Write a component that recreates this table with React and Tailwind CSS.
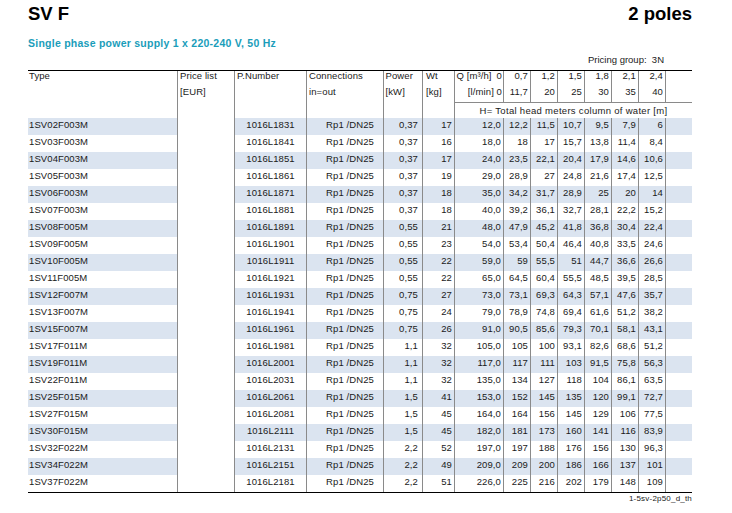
import React from 'react';

const GRID =
  'grid grid-cols-[149px_57px_72px_77px_39px_32px_49px_27px_27px_27px_27px_27px_27px_27px]';
const LINE = 'border-l border-[#8a8a8a]';
const STRIPE = 'bg-[#dbe4f0]';

const rows = [
  ['1SV02F003M', '1016L1831', '0,37', '17', '12,0', '12,2', '11,5', '10,7', '9,5', '7,9', '6'],
  ['1SV03F003M', '1016L1841', '0,37', '16', '18,0', '18', '17', '15,7', '13,8', '11,4', '8,4'],
  ['1SV04F003M', '1016L1851', '0,37', '17', '24,0', '23,5', '22,1', '20,4', '17,9', '14,6', '10,6'],
  ['1SV05F003M', '1016L1861', '0,37', '19', '29,0', '28,9', '27', '24,8', '21,6', '17,4', '12,5'],
  ['1SV06F003M', '1016L1871', '0,37', '18', '35,0', '34,2', '31,7', '28,9', '25', '20', '14'],
  ['1SV07F003M', '1016L1881', '0,37', '18', '40,0', '39,2', '36,1', '32,7', '28,1', '22,2', '15,2'],
  ['1SV08F005M', '1016L1891', '0,55', '21', '48,0', '47,9', '45,2', '41,8', '36,8', '30,4', '22,4'],
  ['1SV09F005M', '1016L1901', '0,55', '23', '54,0', '53,4', '50,4', '46,4', '40,8', '33,5', '24,6'],
  ['1SV10F005M', '1016L1911', '0,55', '22', '59,0', '59', '55,5', '51', '44,7', '36,6', '26,6'],
  ['1SV11F005M', '1016L1921', '0,55', '22', '65,0', '64,5', '60,4', '55,5', '48,5', '39,5', '28,5'],
  ['1SV12F007M', '1016L1931', '0,75', '27', '73,0', '73,1', '69,3', '64,3', '57,1', '47,6', '35,7'],
  ['1SV13F007M', '1016L1941', '0,75', '24', '79,0', '78,9', '74,8', '69,4', '61,6', '51,2', '38,2'],
  ['1SV15F007M', '1016L1961', '0,75', '26', '91,0', '90,5', '85,6', '79,3', '70,1', '58,1', '43,1'],
  ['1SV17F011M', '1016L1981', '1,1', '32', '105,0', '105', '100', '93,1', '82,6', '68,6', '51,2'],
  ['1SV19F011M', '1016L2001', '1,1', '32', '117,0', '117', '111', '103', '91,5', '75,8', '56,3'],
  ['1SV22F011M', '1016L2031', '1,1', '32', '135,0', '134', '127', '118', '104', '86,1', '63,5'],
  ['1SV25F015M', '1016L2061', '1,5', '41', '153,0', '152', '145', '135', '120', '99,1', '72,7'],
  ['1SV27F015M', '1016L2081', '1,5', '45', '164,0', '164', '156', '145', '129', '106', '77,5'],
  ['1SV30F015M', '1016L2111', '1,5', '45', '182,0', '181', '173', '160', '141', '116', '83,9'],
  ['1SV32F022M', '1016L2131', '2,2', '52', '197,0', '197', '188', '176', '156', '130', '96,3'],
  ['1SV34F022M', '1016L2151', '2,2', '49', '209,0', '209', '200', '186', '166', '137', '101'],
  ['1SV37F022M', '1016L2181', '2,2', '51', '226,0', '225', '216', '202', '179', '148', '109'],
];

const qHead = ['0,7', '1,2', '1,5', '1,8', '2,1', '2,4'];
const lHead = ['11,7', '20', '25', '30', '35', '40'];

const DataRow = ({ row, striped }) => {
  const bg = striped ? STRIPE : '';
  const [type, pnum, power, wt, ...heads] = row;
  return (
    <div className={`${GRID} h-[17px]`}>
      <div className={`flex items-center pl-[1px] pb-[2px] ${bg}`}>{type}</div>
      <div className={LINE}></div>
      <div className={`${LINE} ${bg} flex items-center justify-center pb-[2px]`}>{pnum}</div>
      <div className={`${LINE} ${bg} flex items-center justify-end pr-[9px] pb-[2px]`}>Rp1 /DN25</div>
      <div className={`${LINE} ${bg} flex items-center justify-end pr-[4px] pb-[2px]`}>{power}</div>
      <div className={`${LINE} ${bg} flex items-center justify-end pr-[2px] pb-[2px]`}>{wt}</div>
      {heads.map((h, i) => (
        <div key={i} className={`${LINE} ${bg} flex items-center justify-end pr-[2px] pb-[2px]`}>
          {h}
        </div>
      ))}
      <div className={`${LINE} ${bg}`}></div>
    </div>
  );
};

export default function App() {
  return (
    <div className="w-[732px] h-[513px] bg-white text-[#1a1a1a] font-['Liberation_Sans',Arial,sans-serif] overflow-hidden">
      <div className="ml-[28px] w-[664px]">
        {/* Titel */}
        <div className="mt-[5px] flex justify-between text-[18.5px] leading-[18px] font-bold text-black">
          <span>SV F</span>
          <span>2 poles</span>
        </div>
        <div className="mt-[14.5px] text-[10.5px] leading-[10px] font-bold tracking-[0.25px] text-[#1a9dba]">
          Single phase power supply 1 x 220-240 V, 50 Hz
        </div>
        <div className="mt-[7px] pr-[28px] text-right text-[9.5px] leading-[10px] whitespace-pre">
          Pricing group:  3N
        </div>

        {/* Tabelle */}
        <div className="mt-[5.3px] border-y-[1.5px] border-black text-[9.5px] leading-[10px] tracking-[0.1px]">
          <div className={`${GRID} h-[12.5px]`}>
            <div className="pl-[1px] pt-[0.5px]">Type</div>
            <div className={`${LINE} pl-[2px] pt-[0.5px]`}>Price list</div>
            <div className={`${LINE} pl-[2px] pt-[0.5px]`}>P.Number</div>
            <div className={`${LINE} pl-[2px] pt-[0.5px]`}>Connections</div>
            <div className={`${LINE} pl-[1.5px] pt-[0.5px]`}>Power</div>
            <div className={`${LINE} pl-[3px] pt-[0.5px]`}>Wt</div>
            <div className={`${LINE} flex justify-between pl-[1.5px] pr-[1px] pt-[0.5px]`}>
              <span>Q [m³/h]</span>
              <span>0</span>
            </div>
            {qHead.map((q) => (
              <div key={q} className={`${LINE} text-right pr-[2px] pt-[0.5px]`}>
                {q}
              </div>
            ))}
            <div className={LINE}></div>
          </div>
          <div className={`${GRID} h-[19px]`}>
            <div></div>
            <div className={`${LINE} pl-[2px] pt-[3.5px]`}>[EUR]</div>
            <div className={LINE}></div>
            <div className={`${LINE} pl-[2px] pt-[3.5px]`}>in=out</div>
            <div className={`${LINE} pl-[1.5px] pt-[3.5px]`}>[kW]</div>
            <div className={`${LINE} pl-[3px] pt-[3.5px]`}>[kg]</div>
            <div className={`${LINE} text-right pr-[1px] pt-[3.5px]`}>[l/min] 0</div>
            {lHead.map((l) => (
              <div key={l} className={`${LINE} text-right pr-[2px] pt-[3.5px]`}>
                {l}
              </div>
            ))}
            <div className={LINE}></div>
          </div>
          <div className={`${GRID} h-[15.5px]`}>
            <div></div>
            <div className={LINE}></div>
            <div className={LINE}></div>
            <div className={LINE}></div>
            <div className={LINE}></div>
            <div className={LINE}></div>
            <div className={`${LINE} col-span-8 border-t text-center pt-[3px] tracking-[0.3px]`}>
              H= Total head meters column of water [m]
            </div>
          </div>
          {rows.map((r, i) => (
            <DataRow key={r[0]} row={r} striped={i % 2 === 0} />
          ))}
        </div>
        <div className="mt-[1px] text-right text-[8px] leading-[10px] tracking-[0.2px]">
          1-5sv-2p50_d_th
        </div>
      </div>
    </div>
  );
}
